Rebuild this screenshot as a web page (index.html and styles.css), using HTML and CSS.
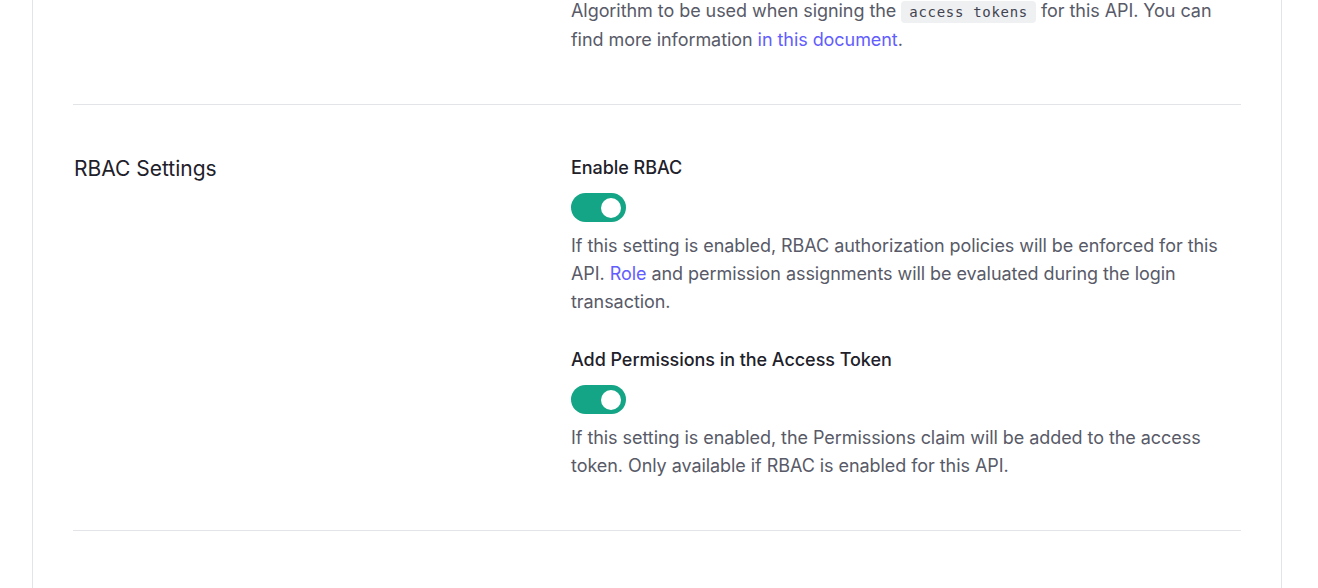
FILE: index.html
```html
<!DOCTYPE html>
<html lang="en">
<head>
<meta charset="utf-8">
<title>API Settings</title>
<link rel="stylesheet" href="styles.css">
</head>
<body>
<div class="card">
  <section class="row row-first">
    <div class="row-title"></div>
    <div class="row-body">
      <p class="desc">Algorithm to be used when signing the <code class="code">access tokens</code> for this API. You can find more information <a class="link" href="#">in this document</a>.</p>
    </div>
  </section>
  <section class="row">
    <h2 class="row-title">RBAC Settings</h2>
    <div class="row-body">
      <div class="field">
        <div class="label">Enable RBAC</div>
        <span class="toggle"><span class="knob"></span></span>
        <p class="desc">If this setting is enabled, RBAC authorization policies will be enforced for this API. <a class="link" href="#">Role</a> and permission assignments will be evaluated during the login transaction.</p>
      </div>
      <div class="field">
        <div class="label">Add Permissions in the Access Token</div>
        <span class="toggle"><span class="knob"></span></span>
        <p class="desc">If this setting is enabled, the Permissions claim will be added to the access token. Only available if RBAC is enabled for this API.</p>
      </div>
    </div>
  </section>
  <section class="row row-last">
    <div class="row-title"></div>
    <div class="row-body">
      <div class="field field-next">
        <div class="label">Allow Offline Access</div>
      </div>
    </div>
  </section>
</div>
</body>
</html>
```
FILE: styles.css
```css
html, body {
  margin: 0;
  padding: 0;
  background: #ffffff;
  overflow: hidden;
}
body {
  font-family: Inter, "Noto Sans", sans-serif;
  color: #585a68;
  height: 588px;
}
.card {
  width: 1168px;
  margin: -3px 0 0 32px;
  padding: 0 40px;
  border-left: 1px solid #e3e4e8;
  border-right: 1px solid #e3e4e8;
}
.row {
  display: grid;
  grid-template-columns: 498px 1fr;
  padding: 50px 0;
  border-bottom: 1px solid #e3e4e8;
}
.row-first {
  padding-top: 0;
}
.row-last {
  border-bottom: none;
}
.row-title {
  margin: 0;
  font-size: 21px;
  line-height: 28px;
  font-weight: 400;
  color: #1e212a;
  padding-left: 1px;
}
.row-body {
  min-width: 0;
}
.field + .field {
  margin-top: 31px;
}
.field-next {
  padding-top: 5px;
  padding-left: 56px;
}
.label {
  font-size: 18px;
  line-height: 26px;
  font-weight: 500;
  color: #1e212a;
  letter-spacing: -0.05px;
}
.toggle {
  display: flex;
  align-items: center;
  justify-content: flex-end;
  box-sizing: border-box;
  width: 55px;
  height: 29px;
  margin-top: 12px;
  margin-bottom: 10px;
  padding-right: 5px;
  border-radius: 15px;
  background: #13a586;
}
.knob {
  width: 20px;
  height: 20px;
  border-radius: 50%;
  background: #ffffff;
}
.desc {
  margin: 0;
  font-size: 18px;
  line-height: 28px;
  letter-spacing: -0.06px;
  color: #585a68;
}
.code {
  font-family: "DejaVu Sans Mono", "Liberation Mono", monospace;
  font-size: 14px;
  letter-spacing: 0.7px;
  color: #3f4350;
  background: #eff0f2;
  border-radius: 4px;
  padding: 3px 8px;
}
.link {
  color: #635dff;
  text-decoration: none;
}
```
